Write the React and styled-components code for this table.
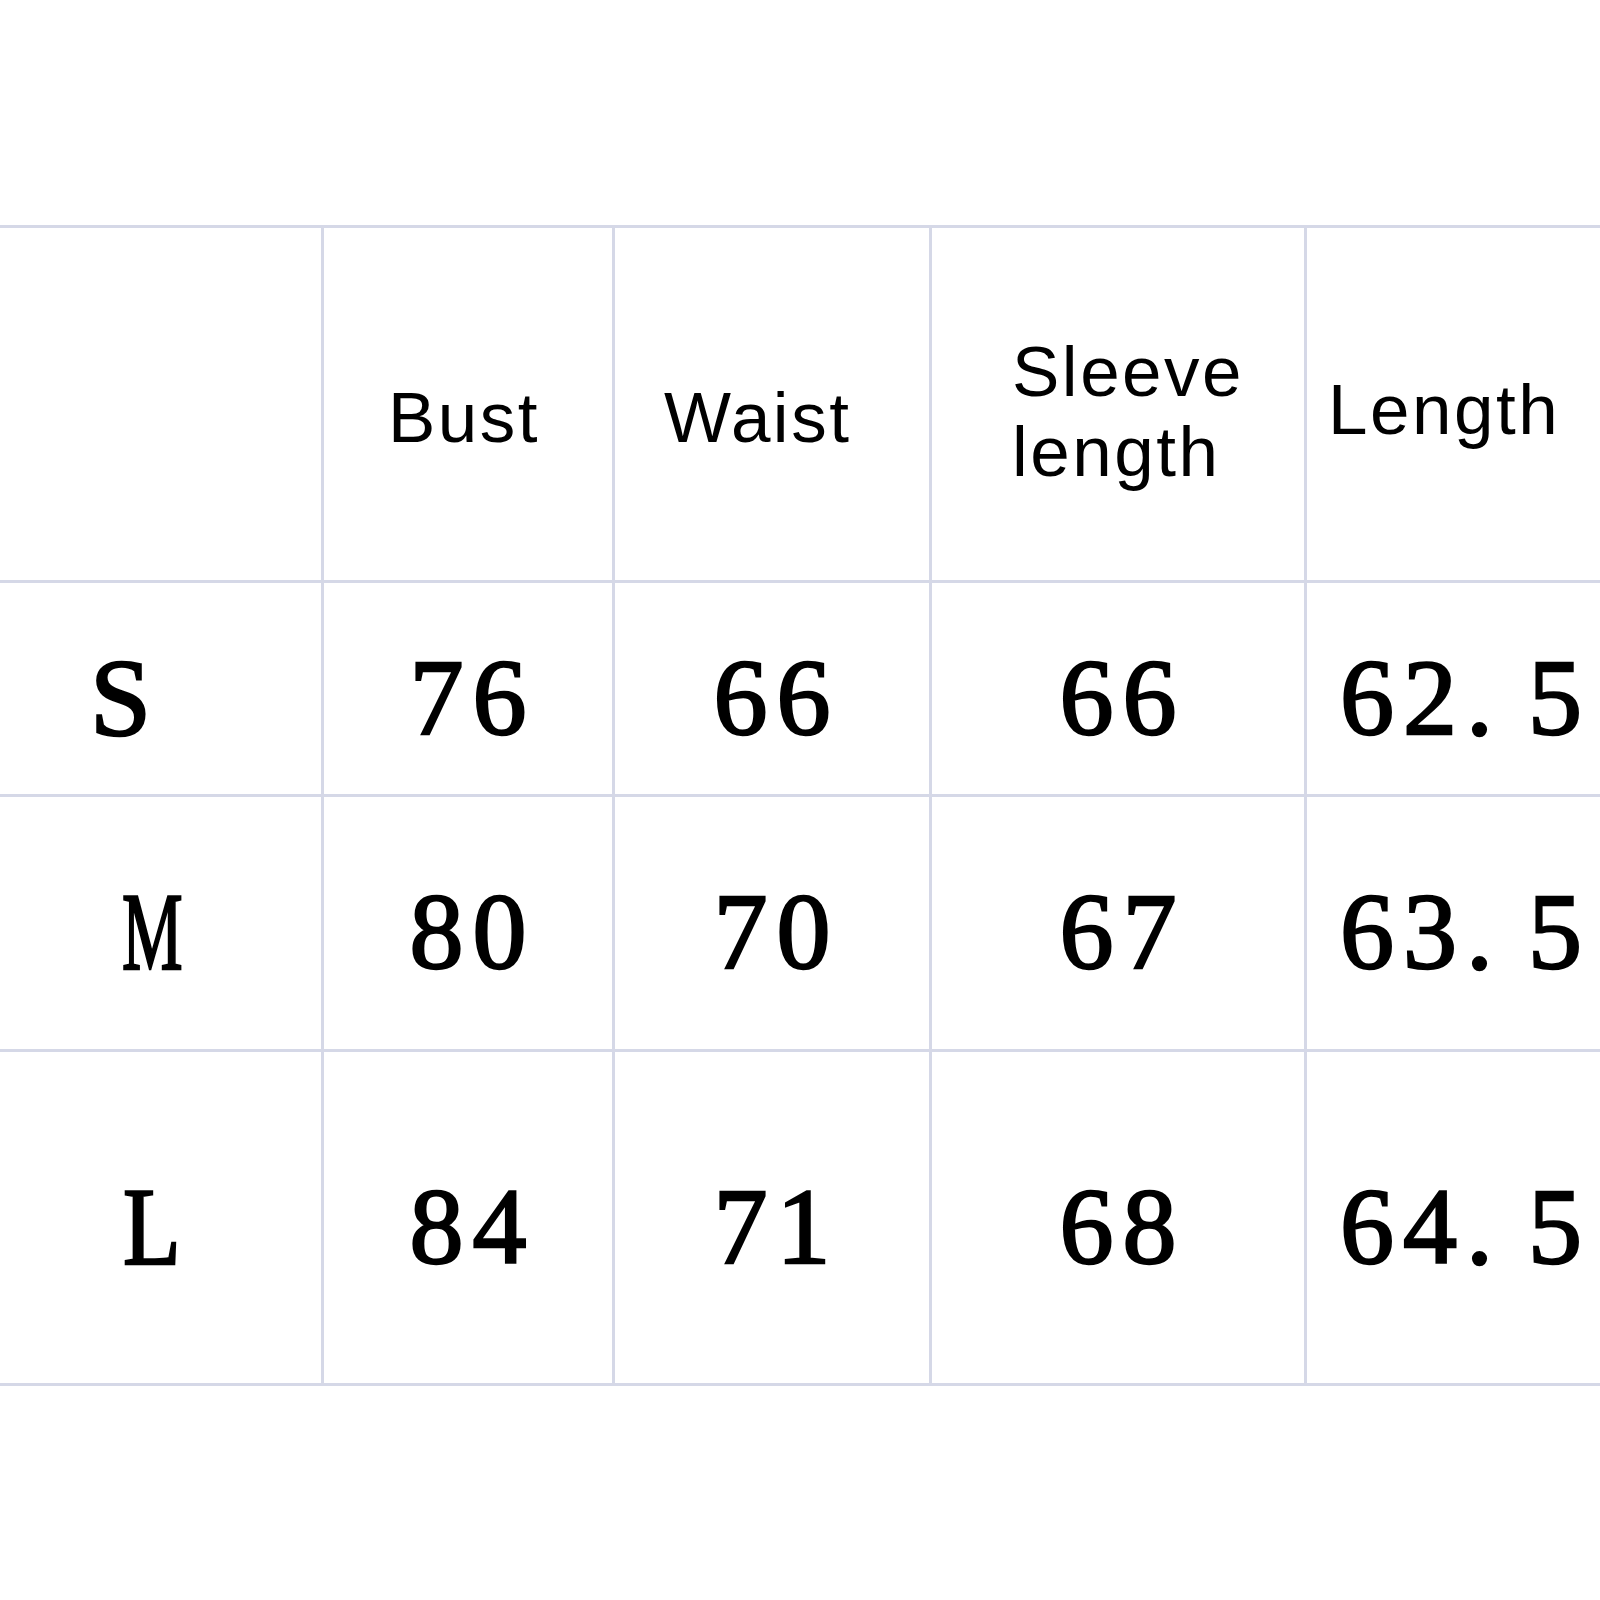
import React from 'react';
import styled, { createGlobalStyle } from 'styled-components';

const GlobalStyle = createGlobalStyle`
  body {
    margin: 0;
    background: #ffffff;
    overflow: hidden;
  }
`;

const Page = styled.div`
  width: 1600px;
  height: 1600px;
  padding-top: 225px;
  box-sizing: border-box;
  background: #fff;
`;

// the grid lines are the sheet background showing through the gaps
const Sheet = styled.div`
  display: grid;
  grid-template-columns: 321px 288px 314px 372px 293px;
  grid-template-rows: 352px 211px 252px 331px;
  gap: 3px;
  padding: 3px 0;
  background: #d5d8e7;
`;

const HeadCell = styled.div`
  background: #fff;
  padding: ${(p) => p.$top || 0}px 0 0 ${(p) => p.$left || 0}px;
  font-family: 'Liberation Sans', Arial, sans-serif;
  font-size: 71px;
  line-height: 80px;
  letter-spacing: 2.5px;
  color: #000;
`;

const Cell = styled.div`
  background: #fff;
  display: flex;
  align-items: center;
  justify-content: ${(p) => (p.$left != null ? 'flex-start' : 'center')};
  padding-left: ${(p) => p.$left || 0}px;
  padding-top: 18px;
  box-sizing: border-box;
  font-family: 'Liberation Serif', 'Times New Roman', serif;
  color: #000;
  -webkit-text-stroke: 2.4px #000;
`;

const Num = styled.span`
  font-size: 108px;
  line-height: 108px;
  letter-spacing: 9px;
  padding-left: ${(p) => (p.$pad ? 9 : 0)}px;
`;

const Dot = styled.span`
  letter-spacing: 35px;
`;

const Size = styled.span`
  display: inline-block;
  font-size: 110px;
  line-height: 108px;
  transform: scaleX(${(p) => p.$squeeze || 1});
  transform-origin: left center;
`;

const heads = [
  { label: '', top: 0, left: 0 },
  { label: 'Bust', top: 150, left: 64 },
  { label: 'Waist', top: 150, left: 49 },
  { label: 'Sleeve length', top: 104, left: 80 },
  { label: 'Length', top: 142, left: 21 },
];

const rows = [
  { size: 'S', left: 90, squeeze: 1, values: ['76', '66', '66', '62.5'] },
  { size: 'M', left: 122, squeeze: 0.62, values: ['80', '70', '67', '63.5'] },
  { size: 'L', left: 123, squeeze: 0.86, values: ['84', '71', '68', '64.5'] },
];

const Value = ({ text }) => {
  const [whole, frac] = text.split('.');
  if (frac == null) return <Num $pad>{text}</Num>;
  return (
    <Num>
      {whole}
      <Dot>.</Dot>
      {frac}
    </Num>
  );
};

const App = () => {
  return (
    <Page>
      <GlobalStyle />
      <Sheet>
        {heads.map((h, i) => (
          <HeadCell key={i} $top={h.top} $left={h.left}>
            {h.label}
          </HeadCell>
        ))}
        {rows.map((r) => (
          <React.Fragment key={r.size}>
            <Cell $left={r.left}>
              <Size $squeeze={r.squeeze}>{r.size}</Size>
            </Cell>
            {r.values.map((v, i) => (
              <Cell key={i} $left={i === 3 ? 33 : undefined}>
                <Value text={v} />
              </Cell>
            ))}
          </React.Fragment>
        ))}
      </Sheet>
    </Page>
  );
};

export default App;
